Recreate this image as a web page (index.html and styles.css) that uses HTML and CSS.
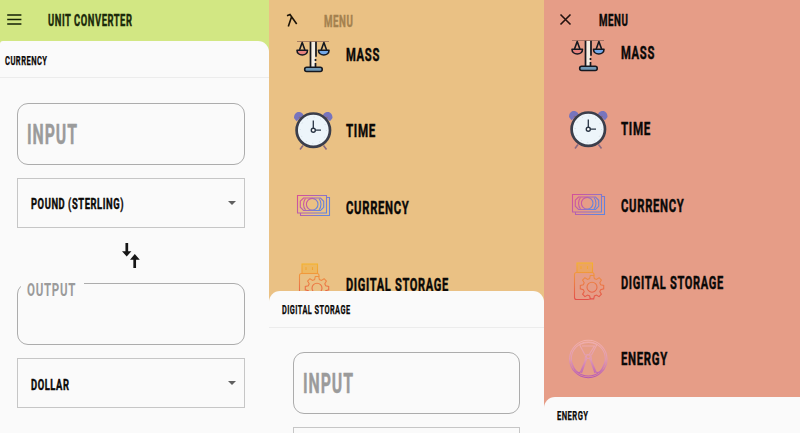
FILE: index.html
```html
<!DOCTYPE html>
<html lang="en">
<head>
<meta charset="utf-8">
<title>Unit Converter</title>
<link rel="stylesheet" href="styles.css">
</head>
<body>
<svg class="defs" width="0" height="0" aria-hidden="true">
  <defs>
    <linearGradient id="money" x1="0" y1="0" x2="1" y2="0.4"><stop offset="0" stop-color="#d64f98"/><stop offset=".55" stop-color="#a868b8"/><stop offset="1" stop-color="#6484dc"/></linearGradient>
    <linearGradient id="usb" gradientUnits="userSpaceOnUse" x1="0" y1="1" x2="0" y2="39"><stop offset="0" stop-color="#f5b52c"/><stop offset=".45" stop-color="#ee8744"/><stop offset="1" stop-color="#e34f49"/></linearGradient>
    <linearGradient id="power" gradientUnits="userSpaceOnUse" x1="0" y1="2" x2="0" y2="41"><stop offset="0" stop-color="#f2b0aa"/><stop offset=".5" stop-color="#e09ab4"/><stop offset="1" stop-color="#b151b5"/></linearGradient>
    <symbol id="mass" viewBox="0 0 44 44">
      <path d="M6 9.500h32" stroke="#8b6255" stroke-width=".7"/>
      <g stroke="#151820" stroke-width="1.600" stroke-linejoin="round">
        <path d="M8.500 18l2.700-7.500 2.700 7.500M30.200 18l2.700-7.500 2.700 7.500" fill="none"/>
        <path class="pan-left" d="M6 18.200h10.500c0 3-2.300 4.800-5.200 4.800S6 21.200 6 18.200z" fill="#e6837e"/>
        <path d="M27.500 18.200H38c0 3-2.300 4.800-5.200 4.800s-5.300-1.800-5.300-4.800z" fill="#75a9e9"/>
        <path d="M22.200 10v25" stroke="#f4eee4" stroke-width="4"/>
        <path d="M19.500 9.700v25.500M25 9.700v15M24.500 27v2M24.500 31v4" stroke-width="1.700"/>
        <rect x="13.700" y="35.200" width="17.500" height="4.300" rx="2" fill="#7199b6"/>
      </g>
    </symbol>
    <symbol id="clock" viewBox="0 0 44 44">
      <g fill="#7774bd"><path d="M3 9C3 4 7 1 11.500 4.500l1.200 1.700-7.200 6z"/><path d="M41.500 9c0-5-4-8-8.500-4.500l-1.200 1.700 7.200 6z"/></g>
      <path d="M12 36.500l-3 4M32.500 36.500l3 4M8 8l4 3.500M36.500 8l-4 3.500" stroke="#8b6980" stroke-width="1.600"/>
      <circle cx="22.300" cy="21.200" r="16.700" fill="#edf5fa" stroke="#3b3e4b" stroke-width="2.700"/>
      <circle cx="22.300" cy="21.200" r="13.200" fill="none" stroke="#cbd8df" stroke-width="1" stroke-dasharray=".8 6.110"/>
      <path d="M22.300 11.500v8M24 21.200h6" stroke="#293544" stroke-width="1.300"/>
      <circle cx="22.300" cy="21.200" r="2" fill="#fff" stroke="#293544" stroke-width="1.400"/>
    </symbol>
    <symbol id="cash" viewBox="0 0 44 44">
      <g fill="none" stroke="url(#money)" stroke-width="1.100">
        <path d="M6.500 10.500h29v17.500h-29zM9.500 28v2.500H38.500V12.500h-3"/>
        <path d="M12.500 13h17l3.200 3.300v6L29.500 25.500h-17l-3.200-3.300v-6z"/>
        <circle cx="21.200" cy="19.200" r="5.800"/>
        <path d="M14.500 13.500c-2.600 3.200-2.600 8.200 0 11.500M28 13.500c2.600 3.200 2.600 8.200 0 11.500"/>
      </g>
    </symbol>
    <symbol id="storage" viewBox="0 0 44 44">
      <g fill="none" stroke="url(#usb)" stroke-width="1.100">
        <rect x="11" y="2" width="15.500" height="9.500" fill="#f4ae35" fill-opacity=".45"/>
        <path d="M15 5v3M21.500 5v3M28 15v-1.500q0-2-2-2H10.500q-2 0-2 2v23q0 2 2 2H22q2 0 3-1.500"/>
        <path d="M24.300 14.500h3.400l.7 3 2 .9 2.700-1.700 2.300 2.400-1.600 2.700.9 2 3 .7v3.300l-3 .8-.9 2 1.600 2.600-2.300 2.400-2.700-1.600-2 .9-.7 3h-3.400l-.7-3-2-.9-2.700 1.600-2.300-2.400 1.600-2.600-.9-2-3-.8v-3.300l3-.7.9-2-1.600-2.700 2.300-2.400 2.700 1.700 2-.9z"/>
        <circle cx="26" cy="26.200" r="5"/>
      </g>
    </symbol>
    <symbol id="energy" viewBox="0 0 44 44">
      <g fill="none" stroke="url(#power)" stroke-width="1.100">
        <circle cx="22.300" cy="21" r="18.700"/><circle cx="22.300" cy="21" r="17"/>
        <path d="M13.500 6.500q9-4 17.500 0l-5.500 10.500h-6.500zM16 8h12.500l-5 8M19.500 18l-.5 5L14.500 34q-3 1.500-5.500-1.500L4.500 22M25 18l.5 5L30 34q3 1.500 5.500-1.500L40 22M21 20l-5.500 15M23.500 20L29 35"/>
        <circle cx="22.300" cy="18.500" r="2"/>
      </g>
    </symbol>
  </defs>
</svg>

<main class="screens">
  <section class="screen lime">
    <header class="bar">
      <svg class="bar-icon" viewBox="0 0 16 16"><path d="M.2 3h14.200M.2 7.500h14.200M.2 12h14.200" stroke="#152206" stroke-width="1.700"/></svg>
      <svg class="label title"><text x="0" y="16" textLength="84.500" lengthAdjust="spacingAndGlyphs">UNIT CONVERTER</text></svg>
    </header>
    <article class="sheet sheet-currency">
      <h2 class="sheet-head"><svg class="label small"><text x="0" y="15.500" textLength="42.500" lengthAdjust="spacingAndGlyphs">CURRENCY</text></svg></h2>
      <div class="form">
        <div class="field"><svg class="label hint"><text x="0" y="26" textLength="51" lengthAdjust="spacingAndGlyphs">INPUT</text></svg></div>
        <div class="select"><svg class="label option"><text x="0" y="16" textLength="93" lengthAdjust="spacingAndGlyphs">POUND (STERLING)</text></svg><i class="caret"></i></div>
        <svg class="swap" viewBox="0 0 18 27"><path d="M4.800 1v9M12.700 26V17" stroke="#161616" stroke-width="2.700"/><path d="M0 9.200h9.400L4.700 14.500zM8 17.700h9.800L12.800 12z" fill="#161616"/></svg>
        <div class="field output"><span class="notch"><svg class="label floating"><text x="0" y="17" textLength="49" lengthAdjust="spacingAndGlyphs">OUTPUT</text></svg></span></div>
        <div class="select"><svg class="label option"><text x="0" y="16.500" textLength="38.500" lengthAdjust="spacingAndGlyphs">DOLLAR</text></svg><i class="caret"></i></div>
      </div>
    </article>
  </section>

  <section class="screen amber">
    <header class="bar">
      <svg class="bar-icon" viewBox="0 0 16 16"><path d="M1 2.700L4 1.500l6.700 9.500M5.500 4L2.300 13.500" fill="none" stroke="#1c1408" stroke-width="1.600"/></svg>
      <svg class="label title faded"><text x="0" y="16" textLength="29.500" lengthAdjust="spacingAndGlyphs">MENU</text></svg>
    </header>
    <ul class="menu">
      <li><svg class="icon"><use href="#mass"/></svg><svg class="label item"><text x="0" y="18.500" textLength="34" lengthAdjust="spacingAndGlyphs">MASS</text></svg></li>
      <li><svg class="icon"><use href="#clock"/></svg><svg class="label item"><text x="0" y="18.500" textLength="30" lengthAdjust="spacingAndGlyphs">TIME</text></svg></li>
      <li><svg class="icon"><use href="#cash"/></svg><svg class="label item"><text x="0" y="18.500" textLength="63.500" lengthAdjust="spacingAndGlyphs">CURRENCY</text></svg></li>
      <li><svg class="icon"><use href="#storage"/></svg><svg class="label item"><text x="0" y="18.500" textLength="103" lengthAdjust="spacingAndGlyphs">DIGITAL STORAGE</text></svg></li>
    </ul>
    <article class="sheet sheet-storage">
      <h2 class="sheet-head"><svg class="label small"><text x="0" y="15" textLength="68.500" lengthAdjust="spacingAndGlyphs">DIGITAL STORAGE</text></svg></h2>
      <div class="form">
        <div class="field"><svg class="label hint"><text x="0" y="26" textLength="51" lengthAdjust="spacingAndGlyphs">INPUT</text></svg></div>
        <div class="select"></div>
      </div>
    </article>
  </section>

  <section class="screen coral">
    <header class="bar">
      <svg class="bar-icon" viewBox="0 0 16 16"><path d="M1.500 2.500l10 10M11.500 2.500l-10 10" stroke="#241310" stroke-width="1.600"/></svg>
      <svg class="label title"><text x="0" y="16" textLength="29.500" lengthAdjust="spacingAndGlyphs">MENU</text></svg>
    </header>
    <ul class="menu">
      <li><svg class="icon"><use href="#mass"/></svg><svg class="label item"><text x="0" y="18" textLength="34" lengthAdjust="spacingAndGlyphs">MASS</text></svg></li>
      <li><svg class="icon"><use href="#clock"/></svg><svg class="label item"><text x="0" y="18" textLength="30" lengthAdjust="spacingAndGlyphs">TIME</text></svg></li>
      <li><svg class="icon"><use href="#cash"/></svg><svg class="label item"><text x="0" y="18" textLength="63.500" lengthAdjust="spacingAndGlyphs">CURRENCY</text></svg></li>
      <li><svg class="icon"><use href="#storage"/></svg><svg class="label item"><text x="0" y="18" textLength="103" lengthAdjust="spacingAndGlyphs">DIGITAL STORAGE</text></svg></li>
      <li><svg class="icon"><use href="#energy"/></svg><svg class="label item"><text x="0" y="18" textLength="47" lengthAdjust="spacingAndGlyphs">ENERGY</text></svg></li>
    </ul>
    <article class="sheet sheet-energy">
      <h2 class="sheet-head"><svg class="label small"><text x="0" y="14" textLength="31.500" lengthAdjust="spacingAndGlyphs">ENERGY</text></svg></h2>
    </article>
  </section>
</main>
</body>
</html>
```
FILE: styles.css
```css
* { box-sizing: border-box; }

body {
  margin: 0;
  overflow: hidden;
  font-family: Roboto, "Liberation Sans", sans-serif;
  font-weight: 700;
}

.defs { position: absolute; }

.screens {
  display: grid;
  grid-template-columns: 269px 275px 256px;
  height: 433px;
}

.screen {
  position: relative;
  overflow: hidden;
}

.lime { background: #d2e783; }
.amber { background: #eac184; }
.coral { background: #e69d87; }

.bar {
  display: flex;
  align-items: center;
  height: 40px;
  padding-left: 7px;
  gap: 25px;
}

.amber .bar { padding: 2px 0 0 17px; gap: 22px; }
.coral .bar { padding-left: 15px; gap: 24px; }

.bar-icon { width: 16px; height: 16px; flex: none; }

.label {
  display: block;
  flex: none;
  overflow: visible;
  fill: #0b0907;
  stroke: #0b0907;
  stroke-width: 0.450px;
  letter-spacing: 0.060em;
}

.title { width: 90px; height: 20px; font-size: 16px; }
.lime .title { fill: #1b2909; stroke: #1b2909; }
.amber .faded { fill: #a4814f; stroke: #a4814f; }
.small { width: 70px; height: 20px; font-size: 12.800px; stroke-width: 0.250px; }
.hint { width: 60px; height: 32px; font-size: 27px; fill: #9b9b9b; stroke: #9b9b9b; }
.option { width: 100px; height: 20px; font-size: 15.500px; }
.floating { width: 50px; height: 22px; font-size: 19px; fill: #9b9b9b; stroke: none; }
.item { width: 110px; height: 25px; font-size: 18px; }

.menu {
  list-style: none;
  margin: -24px 0 0;
  padding: 0 0 0 22px;
}

.coral .menu { margin-top: -25px; }

.menu li {
  display: flex;
  align-items: center;
  gap: 11px;
  height: 76.600px;
}

.icon { width: 44px; height: 44px; flex: none; }
.coral .pan-left { fill: #e9a28d; }

.sheet {
  position: absolute;
  left: 0;
  right: 0;
  bottom: 0;
  background: #fafafa;
  border-radius: 11px 11px 0 0;
}

.sheet-currency { top: 41px; border-radius: 3px 11px 0 0; }
.sheet-storage { top: 291px; }
.sheet-energy { top: 397px; border-top-right-radius: 0; }

.sheet-head {
  display: flex;
  align-items: center;
  height: 37px;
  margin: 0;
  padding-left: 12.500px;
  border-bottom: 1px solid #ececec;
}

.sheet-currency .sheet-head { padding-left: 5px; }
.sheet-energy .sheet-head { border: 0; }

.form {
  display: flex;
  flex-direction: column;
  padding: 25px 24px 0 17px;
}

.sheet-storage .form { padding: 24px 24px 0 24px; }

.field {
  position: relative;
  display: flex;
  align-items: center;
  height: 62px;
  padding-left: 9px;
  border: 1px solid #acacac;
  border-radius: 11px;
}

.select {
  display: flex;
  align-items: center;
  justify-content: space-between;
  height: 50.500px;
  margin-top: 12.500px;
  padding: 0 8px 0 12.500px;
  border: 1px solid #c6c6c6;
}

.caret {
  border: 4px solid transparent;
  border-top-color: #606060;
  border-bottom: 0;
}

.swap {
  width: 18px;
  height: 27px;
  margin: 14px 0 0 105px;
}

.output { margin-top: 14px; }

.notch {
  position: absolute;
  top: -5px;
  left: 3px;
  width: 63px;
  height: 20px;
  padding-left: 6px;
  background: #fafafa;
}
```
